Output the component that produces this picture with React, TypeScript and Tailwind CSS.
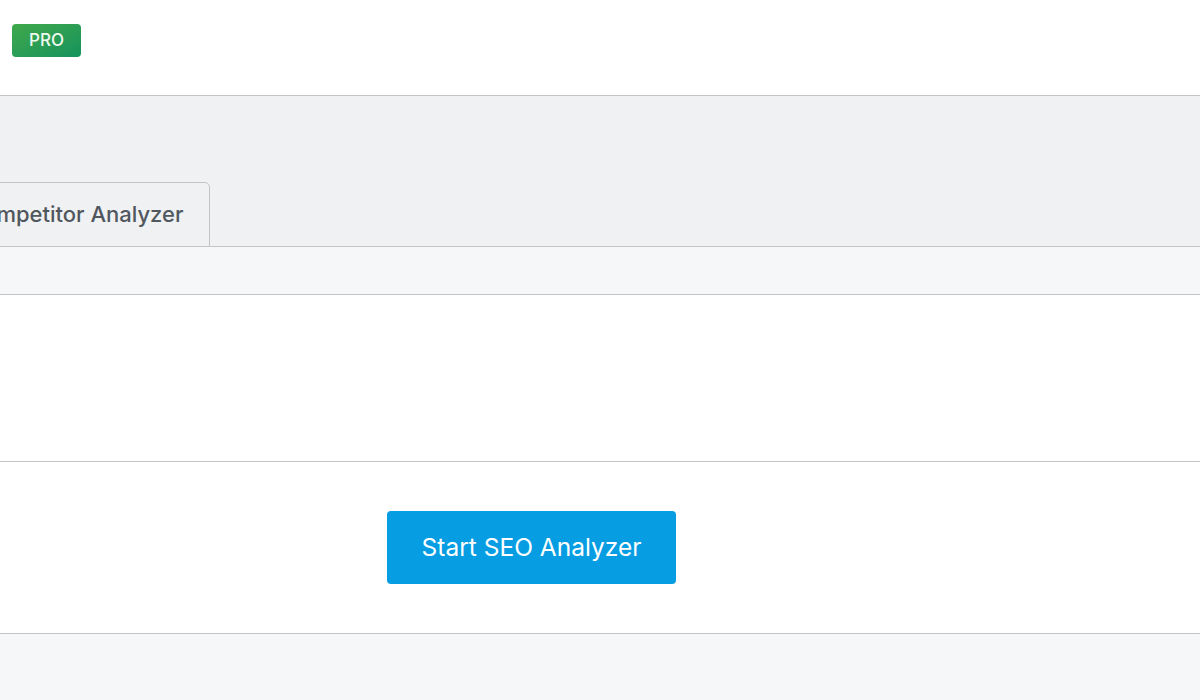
export default function App() {
  return (
    <div className="h-[700px] w-[1200px] overflow-hidden bg-[#f6f7f9] font-['Inter','Liberation_Sans',sans-serif]">
      {/* Header */}
      <div className="h-[95px] bg-white pt-[24px] pl-[12px]">
        <span className="inline-flex h-[33px] w-[69px] items-center justify-center rounded-[4px] bg-gradient-to-br from-[#3ea84a] to-[#11935c] pt-px text-[17px] font-medium text-[#eefaf0]">
          PRO
        </span>
      </div>

      {/* Tabs area */}
      <div className="flex h-[152px] items-end border-y border-[#c3c4c7] bg-[#f0f1f3]">
        <div className="-mb-px ml-[-54px] flex h-[65px] items-center rounded-t-[5px] border border-[#c3c4c7] bg-[#f0f1f3] pl-[20px] pr-[25px] text-[22px] font-medium text-[#50575e]">
          Competitor Analyzer
        </div>
      </div>

      {/* Sub strip */}
      <div className="h-[48px] border-b border-[#c3c4c7] bg-[#f6f7f9]" />

      {/* Content */}
      <div className="h-[167px] border-b border-[#c3c4c7] bg-white" />

      <div className="flex h-[172px] items-center border-b border-[#c3c4c7] bg-white pl-[387px]">
        <button className="h-[73px] w-[289px] rounded-[4px] bg-[#069de3] text-[24.5px] text-white">
          Start SEO Analyzer
        </button>
      </div>
    </div>
  );
}
